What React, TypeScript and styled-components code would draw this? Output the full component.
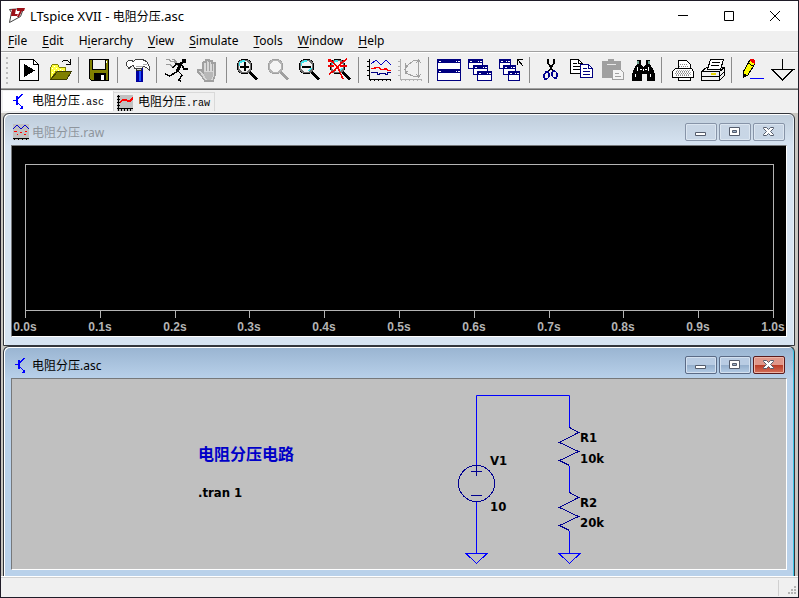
import React from "react";
import styled, { createGlobalStyle, css } from "styled-components";

const uiFont = `"Noto Sans", "Noto Sans CJK SC", sans-serif`;

const GlobalStyle = createGlobalStyle`
  * { box-sizing: border-box; }
  body { margin: 0; font-family: ${uiFont}; font-size: 12px; color: #000; }
  button { font: inherit; color: inherit; margin: 0; padding: 0; border: 0; background: none; }
`;

const AppWindow = styled.div`
  display: flex;
  flex-direction: column;
  min-height: 100vh;
  border: 1px solid #1f1c28;
  background: #f0f0f0;
`;

const TitleBar = styled.header`
  display: flex;
  align-items: center;
  height: 30px;
  padding-left: 7px;
  background: #fff;
`;

const AppTitle = styled.h1`
  flex: 1;
  margin: 0 0 0 4px;
  font-size: 13px;
  font-weight: 400;
  line-height: 28px;
`;

const DocumentName = styled.span`
  font-size: 12px;
`;

const SystemButton = styled.button`
  display: grid;
  place-items: center;
  width: 46px;
  height: 30px;
`;

const MenuBar = styled.nav`
  display: flex;
  gap: 15px;
  height: 20px;
  padding-left: 7px;
  line-height: 20px;

  u { text-underline-offset: 2px; }
`;

const ToolBar = styled.div`
  display: flex;
  align-items: flex-start;
  height: 39px;
  padding: 5px 0 0 5px;
  border-top: 1px solid #a0a0a0;
  border-bottom: 1px solid #696969;
  box-shadow: inset 0 1px #fff, inset 0 -1px #a0a0a0;
  overflow: hidden;
`;

const Grip = styled.span`
  flex: none;
  width: 2px;
  height: 27px;
  margin-right: 5px;
  background: repeating-linear-gradient(#bcbcbc 0 2px, transparent 2px 5px);
`;

const ToolButton = styled.button`
  flex: none;
  width: 31px;
  height: 24px;
  margin-top: 1px;
  padding-left: 4px;

  svg { display: block; }
`;

const ToolDivider = styled.span`
  flex: none;
  width: 1px;
  height: 26px;
  margin: 0 4px 0 3px;
  background: #8c8c8c;
`;

const TabRow = styled.div`
  display: flex;
  align-items: flex-start;
  height: 23px;
  padding: 1px 0 0 2px;
`;

const Tab = styled.button<{ $active?: boolean }>`
  display: flex;
  align-items: center;
  gap: 5px;
  height: ${(p) => (p.$active ? 20 : 19)}px;
  margin-top: ${(p) => (p.$active ? 0 : 1)}px;
  padding: ${(p) => (p.$active ? "0 9px 0 8px" : "1px 4px 0 3px")};
  background: ${(p) => (p.$active ? "#fff" : "#f0f0f0")};
  border: solid #d9d9d9;
  border-width: ${(p) => (p.$active ? "0 1px 0 0" : "1px 1px 0 0")};
  font-family: "Liberation Mono", "Noto Sans CJK SC", monospace;
  font-size: 10px;
  line-height: 18px;
`;

const TabName = styled.span`
  font-family: "Noto Sans CJK SC", sans-serif;
  font-size: 12px;
`;

const Workspace = styled.main`
  flex: 1;
  display: flex;
  flex-direction: column;
  padding: 0 3px 0 2px;
  background: #c8c6c0;
`;

const ChildWindow = styled.section<{ $active?: boolean }>`
  padding: 0 7px ${(p) => (p.$active ? 5 : 8)}px;
  border: 1px solid #33363c;
  border-radius: 6px 6px 0 0;
  ${(p) =>
    p.$active
      ? css`
          flex: 1;
          border-bottom: 0;
          background: linear-gradient(#99b4d1, #b9d1ea 32px);
          box-shadow: inset 1px 1px #fff, inset -1px 0 #3cc6e8;
        `
      : css`
          background: linear-gradient(#bfcddb, #d7e4f2 32px);
          box-shadow: inset 1px 1px #fff, inset -1px 0 #e8f0f8;
        `}
`;

const ChildTitleBar = styled.div`
  display: flex;
  align-items: center;
  gap: 2px;
  height: 31px;
  padding: 4px 2px 0 2px;
`;

const ChildTitle = styled.h2<{ $active?: boolean }>`
  flex: 1;
  margin: 0 0 0 1px;
  padding-top: 2px;
  font-size: 12px;
  font-weight: 400;
  line-height: 18px;
  color: ${(p) => (p.$active ? "#000" : "#8e959d")};
`;

const CaptionButton = styled.button<{ $tone: "idle" | "active" | "close" }>`
  display: grid;
  place-items: center;
  width: 32px;
  height: 18px;
  border-radius: 2px;
  border: 1px solid
    ${(p) => ({ idle: "#8794a8", active: "#5b6b86", close: "#5a1a1c" })[p.$tone]};
  box-shadow: inset 0 0 0 1px
    ${(p) =>
      ({ idle: "#dce6f1", active: "#d4e1f0", close: "#eeb6a8" })[p.$tone]};
  background: ${(p) =>
    ({
      idle: "linear-gradient(#c9d6e5, #c8d6e6)",
      active: "linear-gradient(#b9cce3 50%, #94aecb 50%, #b4cce6)",
      close: "linear-gradient(#e0978a 50%, #b93a25 50%, #d4705a)",
    })[p.$tone]};
`;

const ClientArea = styled.div<{ $fill: string }>`
  border: 1px solid;
  border-color: #76787a #fff #fff #76787a;
  background: ${(p) => p.$fill};

  svg { display: block; width: 100%; height: auto; }
`;

const AxisText = styled.text`
  font: bold 12px "Liberation Sans", sans-serif;
  fill: #b4b4b4;
  text-anchor: middle;
`;

const PartText = styled.text`
  font: bold 13px "DejaVu Sans Condensed", "Noto Sans", sans-serif;
  fill: #000;
`;

const CommentText = styled.text`
  font: bold 16px "Noto Sans CJK SC", sans-serif;
  fill: #0000c8;
`;

const StatusBar = styled.footer`
  display: flex;
  justify-content: flex-end;
  height: 21px;
  border-top: 1px solid #fff;
  box-shadow: inset 0 1px #d0d0d0;
`;

const StatusCorner = styled.div`
  width: 20px;
  height: 16px;
  margin-top: 3px;
  border-left: 1px solid #d0d0d0;
`;

/* ---------- toolbar drawings, all on a 24 x 24 grid ---------- */

const lens = (c: string, rim = "#707070") => (
  <>
    <path d="M14 13.500L22 21.500" stroke={c} strokeWidth="3.400" />
    <circle cx="9.500" cy="8.500" r="6.500" fill="#f4f4f4" stroke={rim} strokeWidth="2" />
    <path d="M6 1.500h7M6 15.500h7M2.500 5v7M16.500 5v7M3 4l2-2M14 2l2 2M3 13l2 2M14 15l2-2" stroke={c} fill="none" />
  </>
);

const miniWindow = (x: number, y: number, w: number, h: number) => (
  <g key={`${x}-${y}`}>
    <rect x={x + 0.5} y={y + 0.5} width={w - 1} height={h - 1} fill="#fff" stroke="#000080" />
    <rect x={x} y={y} width={w} height="4" fill="#000080" />
    <path d={`M${x + 2} ${y + 2.5}h2M${x + w - 5} ${y + 2.5}h1M${x + w - 3} ${y + 2.5}h2`} stroke="#fff" />
  </g>
);

const axes = (c: string) => (
  <path d="M2.500 1v21M0 3.500h3M0 8.500h3M0 12.500h3M0 17.500h3M2 21.500h22M3.500 21v2M7.500 21v2M11.500 21v2M15.500 21v2M19.500 21v2M23.500 21v2" stroke={c} fill="none" />
);

const drawings: Record<string, React.ReactNode> = {
  Run: (
    <>
      <path d="M2.500 1.500h14l5 5v16h-19z" fill="#fff" stroke="#000" />
      <path d="M16.500 1.500v5h5" fill="none" stroke="#000" />
      <path d="M7 6l11 6.500L7 19z" fill="#000" />
    </>
  ),
  Open: (
    <>
      <path d="M2.500 21.500v-12l2-3h5l2 3h6v4H8z" fill="#ffff40" stroke="#808000" />
      <path d="M4 10.500h1M6 8.500h1M8 10.500h1M6 12.500h1M10 12.500h1M4 14.500h1M12 11.500h1M14 12.500h1M4 18.500h1" stroke="#fff" />
      <path d="M2.500 21.500l7-8h14l-5 8z" fill="#808000" stroke="#3c3c00" />
      <path d="M14 4l2-2h3l3 3M22.500 1v5h-5" fill="none" stroke="#000" />
    </>
  ),
  Save: (
    <>
      <path d="M2.500 1.500h19v21h-17l-2-2z" fill="#808000" stroke="#000" />
      <rect x="5.500" y="1.500" width="13" height="10" fill="#f0f0f0" stroke="#000" />
      <path d="M19.500 3v2" stroke="#fff" />
      <rect x="7" y="15" width="12" height="8" fill="#000" />
      <rect x="14" y="17" width="3" height="5" fill="#fff" />
    </>
  ),
  "Control panel": (
    <>
      <path d="M10 10h7v14h-7z" fill="#0000a0" />
      <path d="M13 12h2v11h-2z" fill="#2050ff" />
      <path d="M10.500 9.500h5v3h-5z" fill="#d0d0d0" stroke="#303030" />
      <path d="M.5 4.500l2-2h3l2 1 2-2h7l4 2 3 5v4l-3-3-3-1-2 2H9l-2-3-2 1-2 2-2.500-3z" fill="#fff" stroke="#404040" />
      <path d="M10 8.500h7M17 6.500h4" stroke="#a8a8a8" />
    </>
  ),
  Simulate: (
    <>
      <path d="M1 1.500h3l2 2h3l4 4M1 6.500h4l3 3M7 1.500h2l3 3" stroke="#9a9a9a" fill="none" />
      <path d="M17 1h4v4h-4z" fill="#000" />
      <path d="M17 6h-6l-3 4M17 7l2 4h4" stroke="#000" strokeWidth="1.400" fill="none" />
      <path d="M17 4l-5 9" stroke="#000" strokeWidth="3" />
      <path d="M13 13l-5 3-3 2-5-2M13 13l4 4-3 5 2 1" stroke="#000" strokeWidth="1.400" fill="none" />
    </>
  ),
  Halt: (
    <>
      <path d="M7 14V5l1-1h2l0-2h3v1h3v2h3v12l-2 6H9l-5-7-2-2v-2h3z" fill="#d8d8d8" stroke="#a0a0a0" strokeWidth="1.500" />
      <path d="M10.500 4v9M13.500 4v9M16.500 5v8" stroke="#a0a0a0" />
      <path d="M8 14h9v4l-2 4h-4l-3-5z" fill="#b8b8b8" />
    </>
  ),
  "Zoom in": (
    <>
      {lens("#000")}
      <path d="M4.500 8V5l3-2h2" stroke="#40e8f0" strokeWidth="1.500" fill="none" />
      <path d="M5 8.500h9M9.500 4v9" stroke="#000" strokeWidth="2" />
    </>
  ),
  "Zoom back": lens("#a0a0a0", "#b4b4b4"),
  "Zoom out": (
    <>
      {lens("#000")}
      <path d="M4.500 8V5l3-2h2M14 10l-2 3" stroke="#40e8f0" strokeWidth="1.500" fill="none" />
      <path d="M5 8.500h9" stroke="#000" strokeWidth="2" />
    </>
  ),
  "Zoom to fit": (
    <>
      {lens("#000")}
      <path d="M4.500 8V5l3-2h2M14 10l-2 3" stroke="#40e8f0" strokeWidth="1.500" fill="none" />
      <path d="M1 2l4 2 5 6 5 11M19 1l-6 4-6 7-6 4M0 8h6M12 8h7" stroke="#f00000" strokeWidth="1.500" fill="none" />
      <path d="M0 1h3v3H0z" fill="#f00000" />
    </>
  ),
  Autorange: (
    <>
      {axes("#000")}
      <path d="M4 6l5-4 5 5 5-5 5 5" stroke="#0000c0" fill="none" />
      <path d="M4 10.500h3l2-1h3l2 2h3l2-1 2 2h3" stroke="#f00" strokeWidth="1.500" fill="none" />
      <path d="M4 14.500h6v2h2v-1h6v1h2v-2h4" stroke="#000080" fill="none" />
    </>
  ),
  FFT: (
    <>
      {axes("#b0b0b0")}
      <path d="M21 2.500h-5l-7 5-2 4 2 4 7 3h5M20.500 2v17M18 5l2.500-3L23 5M18 16l2.500 3 2.500-3M7 5v3h3M7 16v-3h3" stroke="#a0a0a0" fill="none" />
    </>
  ),
  "Tile windows": (
    <>
      {miniWindow(0, 1, 24, 11)}
      {miniWindow(0, 11, 24, 12)}
    </>
  ),
  "Cascade windows": (
    <>
      {miniWindow(0, 1, 15, 10)}
      {miniWindow(5, 7, 15, 10)}
      {miniWindow(9, 13, 15, 10)}
    </>
  ),
  "Restore windows": (
    <>
      {miniWindow(0, 1, 12, 10)}
      {miniWindow(4, 7, 13, 10)}
      {miniWindow(9, 13, 12, 10)}
      <path d="M18.500 7V1.500H24M19 2l5 6" stroke="#000" fill="none" />
    </>
  ),
  Cut: (
    <>
      <path d="M10 1v4l5 8M16 1v4l-5 8" stroke="#000" strokeWidth="1.600" fill="none" />
      <path d="M8 14h2l1 2v3l-2 2H7l-1-2v-2zM15 13h2l2 2v3l-1 2h-2l-2-2v-4z" stroke="#000090" strokeWidth="1.400" fill="none" />
    </>
  ),
  Copy: (
    <>
      <path d="M1.500 1.500h8l4 4v10h-12z" fill="#fff" stroke="#000" />
      <path d="M9.500 1.500v4h4M4 5.500h4M4 8.500h7M4 11.500h7" fill="none" stroke="#000" />
      <path d="M11.500 6.500h8l4 4v9h-12z" fill="#fff" stroke="#000080" />
      <path d="M19.500 6.500v4h4M14 10.500h4M14 13.500h7M14 16.500h7" fill="none" stroke="#000080" />
    </>
  ),
  Paste: (
    <>
      <path d="M2 3h6V1h6v2h7v17H2z" fill="#a0a0a0" />
      <path d="M7 6.500h9" stroke="#e8e8e8" />
      <path d="M12.500 11.500h8l3 3v7h-11z" fill="#f4f4f4" stroke="#a0a0a0" />
      <path d="M15 15.500h4M15 18.500h6" stroke="#a0a0a0" />
    </>
  ),
  Find: (
    <>
      <path d="M6 2h4v4l2 3h1l2-3V2h4v4l3 5 2 5v7h-8v-7h-5v7H1v-7l2-5 3-5z" fill="#000" />
      <path d="M7 3v3M18 3v3" stroke="#70a090" strokeWidth="2" />
      <path d="M6.500 9v4M17.500 9v4M9 11.500h2M14 11.500h2M4.500 16v3M19.500 16v3M12.500 11v2" stroke="#fff" />
    </>
  ),
  Print: (
    <>
      <path d="M8.500 2.500h8l4 4v5h-12z" fill="#fff" stroke="#000" />
      <path d="M5.500 10.500h16l2 3v6h-3v3h-12v-3h-6v-6z" fill="#fff" stroke="#000" />
      <path d="M10 6.500h8M9 8.500h9M6 13.500h14M5 15.500h16M6 17.500h14" stroke="#8a8a8a" strokeDasharray="1 1" />
      <path d="M6 12.500h14M5 14.500h16M5 16.500h16" stroke="#b0b0b0" strokeDasharray="1 1" strokeDashoffset="1" />
      <path d="M7 19.500h14" stroke="#000" />
    </>
  ),
  "Print setup": (
    <>
      <path d="M.5 13.500l5-4h18v8l-5 5H.5z" fill="#f0f0f0" stroke="#000" />
      <path d="M9.500 1.500h13l-3 10h-13z" fill="#fff" stroke="#000" />
      <path d="M11 4.500h8M10 7.500h8" stroke="#000" />
      <path d="M.5 13.500h18v9M18.500 13.500l5-4M.5 18.500h18M19 18l4-4" fill="none" stroke="#000" />
      <path d="M10 16h5" stroke="#e8d800" strokeWidth="2" />
    </>
  ),
  "Draw wire": (
    <>
      <path d="M3.500 18.500v-5l6-11h5v4l-7 11z" fill="#ff0" stroke="#000" />
      <path d="M10 1h4l1 2v3l-5-3z" fill="#f00000" />
      <path d="M3 15l4 2-4 3z" fill="#000" />
      <path d="M8 5l5 3" stroke="#000" />
      <path d="M10 20.500h14" stroke="#00f" />
    </>
  ),
  Ground: <path d="M11.500 1v10M0 11.500h23.500M1 11.500l10.500 11 10.500-11" fill="none" stroke="#000" strokeWidth="1.400" />,
};

const toolGroups = [
  ["Run", "Open"],
  ["Save"],
  ["Control panel"],
  ["Simulate", "Halt"],
  ["Zoom in", "Zoom back", "Zoom out", "Zoom to fit"],
  ["Autorange", "FFT"],
  ["Tile windows", "Cascade windows", "Restore windows"],
  ["Cut", "Copy", "Paste", "Find"],
  ["Print", "Print setup"],
  ["Draw wire", "Ground"],
];

const menus: [string, string, string][] = [
  ["", "F", "ile"],
  ["", "E", "dit"],
  ["H", "i", "erarchy"],
  ["", "V", "iew"],
  ["", "S", "imulate"],
  ["", "T", "ools"],
  ["", "W", "indow"],
  ["", "H", "elp"],
];

const TransistorIcon = () => (
  <svg width="16" height="16" shapeRendering="crispEdges" aria-hidden="true">
    <path d="M2 7.500h4M11.500 1L6 6.500M6 9l5 5" stroke="#00f" fill="none" />
    <path d="M6 3v9" stroke="#00f" strokeWidth="2" />
    <path d="M12 12v4H8z" fill="#00f" />
  </svg>
);

const TraceIcon = () => (
  <svg width="16" height="16" shapeRendering="crispEdges" aria-hidden="true">
    <rect width="16" height="16" fill="#c0c0c0" />
    <path d="M1.500 0v16M0 1.500h3M0 4.500h3M0 7.500h3M0 10.500h3M0 13.500h16M4.500 13v3M7.500 13v3M10.500 13v3M13.500 13v3" stroke="#000" />
    <path d="M3 7l3-2h3l2 1h2l3-3" stroke="#f00" strokeWidth="1.500" fill="none" />
  </svg>
);

const WaveformIcon = () => (
  <svg width="16" height="16" shapeRendering="crispEdges" aria-hidden="true">
    <rect width="16" height="16" fill="#c0c0c0" />
    <path d="M0 5l4-4 4 4 4-4 4 4" stroke="#0000d0" fill="none" />
    <path d="M1 7.500h3M7 8.500h2M12 7.500h2M4 10.500h1M11 10.500h2" stroke="#f00" />
    <path d="M0 14.500h16M1.500 14v2M5.500 14v2M9.500 14v2M13.500 14v2" stroke="#000" />
  </svg>
);

const LogoIcon = () => (
  <svg width="18" height="18" aria-hidden="true">
    <path d="M1.500 2.500l2 3-2 10 11-6 3-8z" fill="#fff" stroke="#404040" />
    <path d="M4 2h4L7 7h3l-1 2H3zM9 1h8l-1 3h-2l-3 6H9l3-6H9z" fill="#9c1018" />
  </svg>
);

const captionShapes = {
  Minimize: <path d="M2.500 6.500h10v3h-10z" fill="#fff" stroke="#545c6c" />,
  Maximize: (
    <>
      <path d="M2.500 1.500h10v8h-10z" fill="#fff" stroke="#545c6c" />
      <path d="M5.500 4.500h4v2h-4z" fill="#9cb0c8" stroke="#545c6c" />
    </>
  ),
  Close: (
    <path d="M2.500 1.500h3l2 2 2-2h3v1l-3 3 3 3v1h-3l-2-2-2 2h-3v-1l3-3-3-3z" fill="#fff" stroke="#545c6c" />
  ),
};

function CaptionButtons({ active }: { active?: boolean }) {
  return (
    <>
      {(Object.keys(captionShapes) as (keyof typeof captionShapes)[]).map((name) => (
        <CaptionButton
          key={name}
          aria-label={name}
          $tone={!active ? "idle" : name === "Close" ? "close" : "active"}
        >
          <svg width="16" height="12" aria-hidden="true">{captionShapes[name]}</svg>
        </CaptionButton>
      ))}
    </>
  );
}

function WaveformPlot() {
  const ticks = Array.from({ length: 11 }, (_, i) => ({
    x: Math.round(13 + i * 74.8),
    label: `${(i / 10).toFixed(1)}s`,
  }));
  return (
    <svg viewBox="0 0 774 190" role="img" aria-label="Empty waveform plot">
      <rect x="13.500" y="18.500" width="748" height="146" fill="none" stroke="#b4b4b4" />
      {ticks.map(({ x, label }) => (
        <g key={label}>
          <path d={`M${x + 0.5} 164v8`} stroke="#b4b4b4" />
          <AxisText x={x} y="185">{label}</AxisText>
        </g>
      ))}
    </svg>
  );
}

const resistor = (top: number) =>
  `M557.500 ${top}l9 5-19 10 19 9-19 9 10 5`;

function Schematic() {
  return (
    <svg viewBox="0 0 774 190" role="img" aria-label="Voltage divider schematic">
      <path
        d="M464.500 86V16.500h93V48M464.500 123v51.500M557.500 87v26M557.500 152v22.500"
        fill="none"
        stroke="#0000ff"
      />
      <g fill="none" stroke="#000090" shapeRendering="crispEdges">
        <circle cx="464.500" cy="104.500" r="18" />
        <path d="M459 92.500h11M464.500 87v10M459 116.500h11" />
        <path d={resistor(48.5)} />
        <path d={resistor(113.5)} />
      </g>
      <g fill="none" stroke="#0000ff" shapeRendering="crispEdges">
        <path d="M454 174.500h21l-10.500 10z" />
        <path d="M547 174.500h21l-10.500 10z" />
      </g>
      <CommentText x="186" y="81">电阻分压电路</CommentText>
      <PartText x="186" y="118">.tran 1</PartText>
      <PartText x="478" y="86">V1</PartText>
      <PartText x="478" y="132">10</PartText>
      <PartText x="568" y="63">R1</PartText>
      <PartText x="568" y="84">10k</PartText>
      <PartText x="568" y="128">R2</PartText>
      <PartText x="568" y="148">20k</PartText>
    </svg>
  );
}

export default function App() {
  return (
    <AppWindow>
      <GlobalStyle />
      <TitleBar>
        <LogoIcon />
        <AppTitle>LTspice XVII - <DocumentName>电阻分压</DocumentName>.asc</AppTitle>
        <SystemButton aria-label="Minimize application">
          <svg width="10" height="10"><path d="M0 4.500h10" stroke="#000" /></svg>
        </SystemButton>
        <SystemButton aria-label="Maximize application">
          <svg width="10" height="10"><path d="M.5 .5h9v9h-9z" fill="none" stroke="#000" /></svg>
        </SystemButton>
        <SystemButton aria-label="Close application">
          <svg width="10" height="10"><path d="M0 0l10 10M10 0L0 10" stroke="#000" /></svg>
        </SystemButton>
      </TitleBar>

      <MenuBar aria-label="Main menu">
        {menus.map(([before, key, after]) => (
          <button key={before + key + after}>{before}<u>{key}</u>{after}</button>
        ))}
      </MenuBar>

      <ToolBar role="toolbar" aria-label="Tools">
        <Grip />
        {toolGroups.map((group, i) => (
          <React.Fragment key={group[0]}>
            {i > 0 && <ToolDivider />}
            {group.map((name) => (
              <ToolButton key={name} aria-label={name}>
                <svg width="24" height="24" shapeRendering="crispEdges" aria-hidden="true">
                  {drawings[name]}
                </svg>
              </ToolButton>
            ))}
          </React.Fragment>
        ))}
      </ToolBar>

      <TabRow role="tablist">
        <Tab role="tab" aria-selected="true" $active>
          <TransistorIcon />
          <span><TabName>电阻分压</TabName>.asc</span>
        </Tab>
        <Tab role="tab" aria-selected="false">
          <TraceIcon />
          <span><TabName>电阻分压</TabName>.raw</span>
        </Tab>
      </TabRow>

      <Workspace>
        <ChildWindow>
          <ChildTitleBar>
            <WaveformIcon />
            <ChildTitle>电阻分压.raw</ChildTitle>
            <CaptionButtons />
          </ChildTitleBar>
          <ClientArea $fill="#000"><WaveformPlot /></ClientArea>
        </ChildWindow>
        <ChildWindow $active>
          <ChildTitleBar>
            <TransistorIcon />
            <ChildTitle $active>电阻分压.asc</ChildTitle>
            <CaptionButtons active />
          </ChildTitleBar>
          <ClientArea $fill="#c0c0c0"><Schematic /></ClientArea>
        </ChildWindow>
      </Workspace>

      <StatusBar>
        <StatusCorner>
          <svg width="19" height="16" aria-hidden="true">
            <path d="M15 6h2v2h-2zM12 9h2v2h-2zM15 9h2v2h-2zM9 12h2v2H9zM12 12h2v2h-2zM15 12h2v2h-2z" fill="#b4b4b4" />
          </svg>
        </StatusCorner>
      </StatusBar>
    </AppWindow>
  );
}
